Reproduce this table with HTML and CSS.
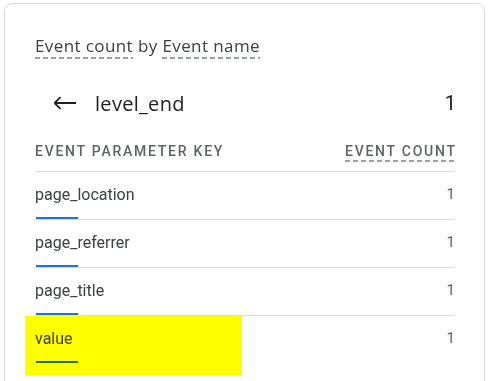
FILE: index.html
```html
<!DOCTYPE html>
<html>
<head>
<meta charset="utf-8">
<link rel="stylesheet" href="styles.css">
</head>
<body>
<div class="card">
  <div class="title"><span class="dash">Event count</span> by <span class="dash">Event name</span></div>
  <div class="level">
    <svg class="back" width="24" height="14" viewBox="0 0 24 14"><path d="M1.5 7H23M1.5 7L7.5 1.2M1.5 7L7.5 12.8" fill="none" stroke="#202124" stroke-width="1.8"/></svg>
    <span class="lname">level_end</span>
    <span class="lval">1</span>
  </div>
  <div class="thead">
    <span>EVENT PARAMETER KEY</span>
    <span class="dash dh">EVENT COUNT</span>
  </div>
  <div class="row"><div class="key">page_location<i class="bar"></i></div><div class="val">1</div></div>
  <div class="row"><div class="key">page_referrer<i class="bar"></i></div><div class="val">1</div></div>
  <div class="row"><div class="key">page_title<i class="bar"></i></div><div class="val">1</div></div>
  <div class="row last"><div class="key">value<i class="bar"></i></div><div class="val">1</div></div>
  <div class="hl"></div>
</div>
</body>
</html>
```
FILE: styles.css
```css
html, body { margin: 0; padding: 0; background: #fff; }
body { font-family: Roboto, "Noto Sans", sans-serif; color: #3c4043; }
.card {
  position: relative;
  margin: 3px 0 0 4px;
  width: 481px;
  height: 420px;
  border: 1px solid #dadce0;
  border-radius: 8px;
  padding: 0 29px 0 30px;
  box-sizing: border-box;
}
.title {
  padding-top: 31px;
  font-family: "Open Sans", Roboto, sans-serif;
  font-size: 17px;
  letter-spacing: 0.4px;
  line-height: 22px;
  color: #3c4043;
}
.dash {
  background-image: linear-gradient(to right, #9aa0a6 0 5px, transparent 5px 8px);
  background-size: 8px 2px;
  background-repeat: repeat-x;
  background-position: 0 100%;
  padding-bottom: 2px;
}
.level {
  display: flex;
  align-items: center;
  margin-top: 34px;
  height: 24px;
  color: #202124;
}
.back { margin-left: 18px; margin-right: 18px; }
.lname { font-family: "Open Sans", Roboto, sans-serif; font-size: 20px; letter-spacing: 0.3px; flex: 1; }
.lval { font-size: 20px; margin-right: -1px; }
.thead {
  display: flex;
  align-items: flex-start;
  justify-content: space-between;
  margin-top: 27px;
  font-size: 14px;
  font-weight: 500;
  letter-spacing: 1.75px;
  color: #5f6368;
  height: 29px;
  line-height: 18px;
  border-bottom: 1px solid #dadce0;
}
.dh { margin-right: -1.75px; padding-bottom: 2px; }
.row {
  display: flex;
  justify-content: space-between;
  height: 47px;
  border-bottom: 1px solid #dadce0;
  font-size: 16px;
}
.row.last { border-bottom-color: transparent; }
.key {
  position: relative;
  padding-top: 13px;
  color: #3c4043;
}
.bar {
  position: absolute;
  left: 1px;
  bottom: 0;
  width: 42px;
  height: 2px;
  background: #1a73e8;
}
.val { padding-top: 13px; color: #5f6368; font-size: 15px; }
.hl {
  position: absolute;
  left: 20px;
  top: 312px;
  width: 217px;
  height: 59px;
  background: #ffff00;
  mix-blend-mode: multiply;
}
```
